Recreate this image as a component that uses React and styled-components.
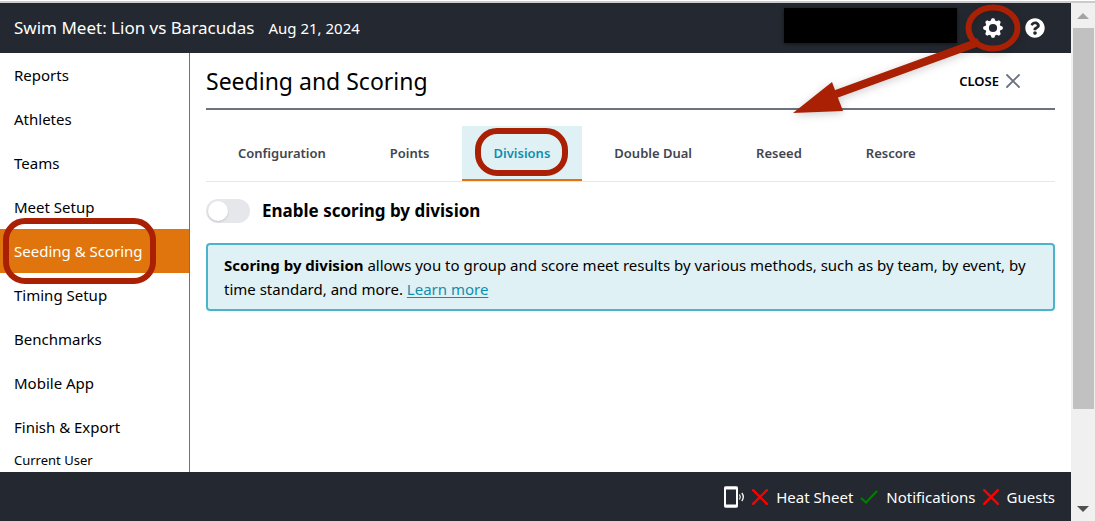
import React, { useState } from "react";
import styled, { createGlobalStyle, css } from "styled-components";
import { FaQuestionCircle } from "react-icons/fa";

const color = {
  ink: "#000000",
  bar: "#242830",
  orange: "#df750c",
  rule: "#6b7280",
  line: "#e5e7eb",
  tint: "#e0f1f5",
  teal: "#4bb4cb",
  link: "#0e8fae",
  mark: "#aa2005",
};

const GlobalStyle = createGlobalStyle`
  *, *::before, *::after { box-sizing: border-box; }
  body {
    margin: 0;
    background: #fff;
    color: ${color.ink};
    font-family: "Segoe UI", "Noto Sans", "Open Sans", sans-serif;
    font-size: 15px;
    line-height: 24px;
  }
  button, input { font: inherit; }
`;

const Page = styled.div`
  display: flex;
  flex-direction: column;
  height: 100vh;
  padding-top: 1px;
  overflow: hidden;
`;

const Viewport = styled.div`
  flex: 1;
  min-height: 0;
  display: grid;
  grid-template-columns: minmax(0, 1fr) 24px;
  border-top: 2px solid #cbcbcb;
`;

const Shell = styled.div`
  display: flex;
  flex-direction: column;
  min-height: 0;
`;

const Header = styled.header`
  display: flex;
  align-items: center;
  flex: none;
  height: 50px;
  padding: 0 26px 0 14px;
  background: ${color.bar};
  color: #fff;
`;

const MeetName = styled.span`
  font-size: 17px;
  margin-right: 14px;
`;

const MeetDate = styled.span`
  flex: 1;
`;

const Redaction = styled.div`
  align-self: flex-start;
  width: 173px;
  height: 35px;
  margin: 5px 26px 0 0;
  background: #000;
  box-shadow: 0 1px 4px rgba(0, 0, 0, 0.5);
`;

const IconButton = styled.button`
  position: relative;
  display: flex;
  margin: 0;
  padding: 0;
  border: 0;
  background: none;
  color: inherit;
  cursor: pointer;

  & + & { margin-left: 22px; }
`;

const Pointer = styled.svg`
  position: absolute;
  z-index: 2;
  left: -195px;
  top: -18px;
  overflow: visible;
  pointer-events: none;
  filter: drop-shadow(0 2px 4px rgba(0, 0, 0, 0.2));
`;

const Body = styled.div`
  display: flex;
  flex: 1;
  min-height: 0;
  overflow: hidden;
`;

const Sidebar = styled.nav`
  flex: none;
  width: 190px;
  border-right: 1px solid ${color.rule};
`;

const outline = css`
  content: "";
  position: absolute;
  z-index: 1;
  border: 6px solid ${color.mark};
  pointer-events: none;
`;

const NavLink = styled.a`
  position: relative;
  display: block;
  padding: 10px 14px;
  color: ${(p) => (p.$active ? "#fff" : color.ink)};
  background: ${(p) => (p.$active ? color.orange : "transparent")};
  text-decoration: none;

  ${(p) => p.$active && css`
    &::after {
      ${outline}
      inset: -11px 33px -11px 3px;
      border-radius: 22px;
    }
  `}
`;

const NavCaption = styled.div`
  padding: 0 14px;
  font-size: 13px;
  line-height: 22px;
`;

const Main = styled.main`
  flex: 1;
  min-width: 0;
  padding: 0 16px;
`;

const TitleRow = styled.div`
  display: flex;
  align-items: center;
  justify-content: space-between;
  height: 57px;
  padding-right: 35px;
  border-bottom: 2px solid ${color.rule};
`;

const Title = styled.h1`
  margin: 0;
  font-size: 23px;
  font-weight: 400;
  line-height: 32px;
`;

const CloseButton = styled.button`
  display: flex;
  align-items: center;
  gap: 7px;
  margin: 0;
  padding: 0;
  border: 0;
  background: none;
  color: ${color.ink};
  font-size: 13px;
  font-weight: 600;
  cursor: pointer;
`;

const Tabs = styled.div`
  display: flex;
  margin-top: 16px;
  border-bottom: 1px solid ${color.line};
`;

const Tab = styled.button`
  position: relative;
  height: 55px;
  margin: 0;
  padding: 0 32px;
  border: 0;
  border-bottom: 2px solid ${(p) => (p.$active ? color.orange : "transparent")};
  background: ${(p) => (p.$active ? color.tint : "transparent")};
  color: ${(p) => (p.$active ? color.link : "#41454f")};
  font-size: 13px;
  font-weight: 600;
  cursor: pointer;

  ${(p) => p.$marked && css`
    &::after {
      ${outline}
      inset: 2px 14px 3px 13px;
      border-radius: 22px;
    }
  `}
`;

const SwitchRow = styled.label`
  display: flex;
  align-items: center;
  gap: 12px;
  margin-top: 17px;
  font-size: 17px;
  font-weight: 700;
  cursor: pointer;
`;

const Switch = styled.input`
  appearance: none;
  flex: none;
  width: 44px;
  height: 24px;
  margin: 0;
  padding: 2px;
  border-radius: 12px;
  background: ${color.line};
  cursor: pointer;

  &::before {
    content: "";
    display: block;
    width: 20px;
    height: 20px;
    border-radius: 50%;
    background: #fff;
    box-shadow: 0 1px 2px rgba(0, 0, 0, 0.15);
  }
  &:checked { background: ${color.teal}; }
  &:checked::before { margin-left: 20px; }
`;

const Notice = styled.p`
  margin: 20px 0 0;
  padding: 8px 16px;
  border: 2px solid ${color.teal};
  border-radius: 4px;
  background: ${color.tint};

  strong { font-weight: 700; }
  a { color: ${color.link}; text-underline-offset: 2px; }
`;

const Footer = styled.footer`
  display: flex;
  align-items: center;
  justify-content: flex-end;
  flex: none;
  gap: 7px;
  height: 49px;
  padding: 0 16px;
  background: ${color.bar};
  color: #fff;
`;

const Status = styled.span`
  display: flex;
  align-items: center;
  gap: 8px;
`;

const Scrollbar = styled.div`
  display: flex;
  flex-direction: column;
  align-items: center;
  background: #f0f0f0;
`;

const ScrollArrow = styled.div`
  display: flex;
  align-items: center;
  justify-content: center;
  flex: none;
  height: 25px;
  color: ${(p) => (p.$dim ? "#a3a3a3" : "#505050")};
`;

const ScrollTrack = styled.div`
  flex: 1;
  width: 21px;
`;

const ScrollThumb = styled.div`
  height: 81.5%;
  background: #c1c1c1;
`;

const GearIcon = () => (
  <svg width="20" height="20" viewBox="-10 -10 20 20" aria-hidden="true">
    <g fill="currentColor">
      {[0, 45, 90, 135, 180, 225, 270, 315].map((a) => (
        <path
          key={a}
          transform={`rotate(${a})`}
          d="M-3-6 L-1.5-9.2 Q-1.2-9.8-.6-9.8 H.6 Q1.2-9.8 1.5-9.2 L3-6Z"
        />
      ))}
    </g>
    <circle r="5.8" fill="none" stroke="currentColor" strokeWidth="3.4" />
  </svg>
);

const Cross = ({ size, stroke, width }) => (
  <svg width={size} height={size} viewBox="0 0 14 14" aria-hidden="true">
    <path d="M1 1 13 13M13 1 1 13" fill="none" stroke={stroke} strokeWidth={width} strokeLinecap="round" />
  </svg>
);

const Check = () => (
  <svg width="18" height="14" viewBox="0 0 18 14" aria-hidden="true">
    <path d="M1 8 6 12.5 17 1" fill="none" stroke="#008000" strokeWidth="2" />
  </svg>
);

const PhoneIcon = () => (
  <svg width="22" height="22" viewBox="0 0 22 22" fill="none" stroke="#fff" aria-hidden="true">
    <rect x="2" y="1.5" width="12" height="19" rx="1" strokeWidth="2" />
    <path d="M1.5 2h13M1.5 20h13" strokeWidth="2.8" />
    <path d="M16.5 8.5q1.6 2.5 0 5" strokeWidth="1.2" />
    <path d="M18.8 7q3 4 0 8" strokeWidth="1.3" />
  </svg>
);

const navItems = [
  "Reports", "Athletes", "Teams", "Meet Setup", "Seeding & Scoring",
  "Timing Setup", "Benchmarks", "Mobile App", "Finish & Export",
];
const tabs = ["Configuration", "Points", "Divisions", "Double Dual", "Reseed", "Rescore"];
const statuses = [
  { label: "Heat Sheet", on: false },
  { label: "Notifications", on: true },
  { label: "Guests", on: false },
];

export default function App() {
  const [tab, setTab] = useState("Divisions");
  const [enabled, setEnabled] = useState(false);

  return (
    <>
      <GlobalStyle />
      <Page>
        <Viewport>
          <Shell>
            <Header>
              <MeetName>Swim Meet: Lion vs Baracudas</MeetName>
              <MeetDate>Aug 21, 2024</MeetDate>
              <Redaction />
              <IconButton aria-label="Settings">
                <GearIcon />
                <Pointer width="240" height="110" viewBox="0 0 240 110" aria-hidden="true">
                  <ellipse cx="205" cy="28" rx="24.5" ry="20.5" fill="none" stroke={color.mark} strokeWidth="6" />
                  <path d="M191 42 48 94" stroke={color.mark} strokeWidth="8" />
                  <path d="M5 113 44 82 55 111Z" fill={color.mark} />
                </Pointer>
              </IconButton>
              <IconButton aria-label="Help">
                <FaQuestionCircle size={20} />
              </IconButton>
            </Header>
            <Body>
              <Sidebar>
                {navItems.map((item) => (
                  <NavLink key={item} href="#" $active={item === "Seeding & Scoring"}>{item}</NavLink>
                ))}
                <NavCaption>Current User</NavCaption>
              </Sidebar>
              <Main>
                <TitleRow>
                  <Title>Seeding and Scoring</Title>
                  <CloseButton>
                    CLOSE
                    <Cross size={14} stroke={color.rule} width={1.8} />
                  </CloseButton>
                </TitleRow>
                <Tabs role="tablist">
                  {tabs.map((name) => (
                    <Tab
                      key={name}
                      role="tab"
                      aria-selected={name === tab}
                      $active={name === tab}
                      $marked={name === "Divisions"}
                      onClick={() => setTab(name)}
                    >
                      {name}
                    </Tab>
                  ))}
                </Tabs>
                <SwitchRow>
                  <Switch
                    type="checkbox"
                    role="switch"
                    checked={enabled}
                    onChange={(e) => setEnabled(e.target.checked)}
                  />
                  Enable scoring by division
                </SwitchRow>
                <Notice>
                  <strong>Scoring by division</strong> allows you to group and score meet results by
                  various methods, such as by team, by event, by time standard, and more.{" "}
                  <a href="#">Learn more</a>
                </Notice>
              </Main>
            </Body>
            <Footer>
              <PhoneIcon />
              {statuses.map(({ label, on }) => (
                <Status key={label}>
                  {on ? <Check /> : <Cross size={16} stroke="#ff0000" width={2} />}
                  {label}
                </Status>
              ))}
            </Footer>
          </Shell>
          <Scrollbar aria-hidden="true">
            <ScrollArrow $dim>
              <svg width="12" height="6" viewBox="0 0 12 6"><path d="M0 6 6 0 12 6Z" fill="currentColor" /></svg>
            </ScrollArrow>
            <ScrollTrack><ScrollThumb /></ScrollTrack>
            <ScrollArrow>
              <svg width="12" height="6" viewBox="0 0 12 6"><path d="M0 0 6 6 12 0Z" fill="currentColor" /></svg>
            </ScrollArrow>
          </Scrollbar>
        </Viewport>
      </Page>
    </>
  );
}
